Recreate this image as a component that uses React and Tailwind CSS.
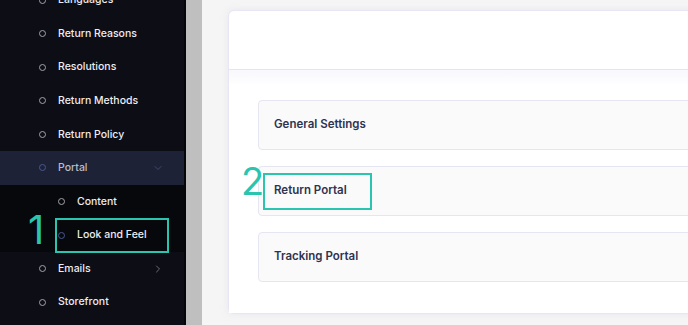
import { ChevronDown, ChevronRight } from "lucide-react";

const font = { fontFamily: "Inter, 'Noto Sans', sans-serif" };

function Bullet({ active }) {
  return (
    <span
      className={`inline-block h-[7px] w-[7px] shrink-0 rounded-full border-[1.5px] ${
        active ? "border-[#4a5891]" : "border-[#a3a3a8]"
      }`}
    />
  );
}

function NavItem({ label, sub, active, muted, chevron, dark }) {
  return (
    <div
      className={`flex h-[33.6px] items-center ${sub ? "pl-[58px]" : "pl-[39px]"} pr-[20px] ${
        active ? "bg-[#1d2236]" : dark ? "bg-[#07080c]" : ""
      }`}
    >
      <Bullet active={active || muted} />
      <span
        className={`ml-[12px] flex-1 text-[10.5px] font-medium ${
          active ? "text-[#b9bdca]" : "text-[#ececf2]"
        }`}
      >
        {label}
      </span>
      {chevron === "down" && <ChevronDown size={12} strokeWidth={1.5} className="text-[#4b5580]" />}
      {chevron === "right" && <ChevronRight size={12} strokeWidth={1.5} className="text-[#8a8c95]" />}
    </div>
  );
}

function SettingRow({ label }) {
  return (
    <div className="flex h-[50px] items-center rounded-[4px] border border-[#e6e6f3] bg-[#fafafa] pl-[15px]">
      <span className="text-[11.5px] font-semibold text-[#2e3350]">{label}</span>
    </div>
  );
}

export default function App() {
  return (
    <div className="relative flex h-[325px] w-[688px] overflow-hidden" style={font}>
      {/* Sidebar */}
      <div className="w-[186px] shrink-0 overflow-hidden border-r-2 border-[#05060a] bg-[#0c0d15]">
        <div className="mt-[-16.8px]">
          <NavItem label="Languages" />
          <NavItem label="Return Reasons" />
          <NavItem label="Resolutions" />
          <NavItem label="Return Methods" />
          <NavItem label="Return Policy" />
          <NavItem label="Portal" active chevron="down" />
          <NavItem label="Content" sub dark />
          <NavItem label="Look and Feel" sub dark muted />
          <NavItem label="Emails" chevron="right" />
          <NavItem label="Storefront" />
        </div>
      </div>

      {/* Scrollbar strip */}
      <div className="w-[16px] shrink-0 bg-[#bfbfbf]" />

      {/* Main */}
      <div className="flex-1 overflow-hidden bg-[#f5f5f5] pl-[26px] pt-[10px]">
        <div className="w-[500px] rounded-[6px] border border-[#e6e6f4] bg-white shadow-[0_0_6px_rgba(220,220,240,0.5)]">
          <div className="h-[59px] border-b border-[#e4e4f3]" />
          <div className="flex flex-col gap-[16px] bg-[linear-gradient(#f8f8fd,#ffffff_16px)] pb-[31px] pl-[29px] pt-[30px]">
            <SettingRow label="General Settings" />
            <SettingRow label="Return Portal" />
            <SettingRow label="Tracking Portal" />
          </div>
        </div>
      </div>

      {/* Annotations */}
      <span className="absolute left-[28px] top-[210px] text-[40px] font-normal leading-none text-[#2bc4ae]">1</span>
      <div className="absolute left-[55px] top-[218px] h-[35px] w-[114px] border-2 border-[#2bc4ae]" />
      <span className="absolute left-[241px] top-[162px] text-[38px] font-normal leading-none text-[#2bc4ae]">2</span>
      <div className="absolute left-[263px] top-[173px] h-[37px] w-[109px] border-2 border-[#2bc4ae]" />
    </div>
  );
}
